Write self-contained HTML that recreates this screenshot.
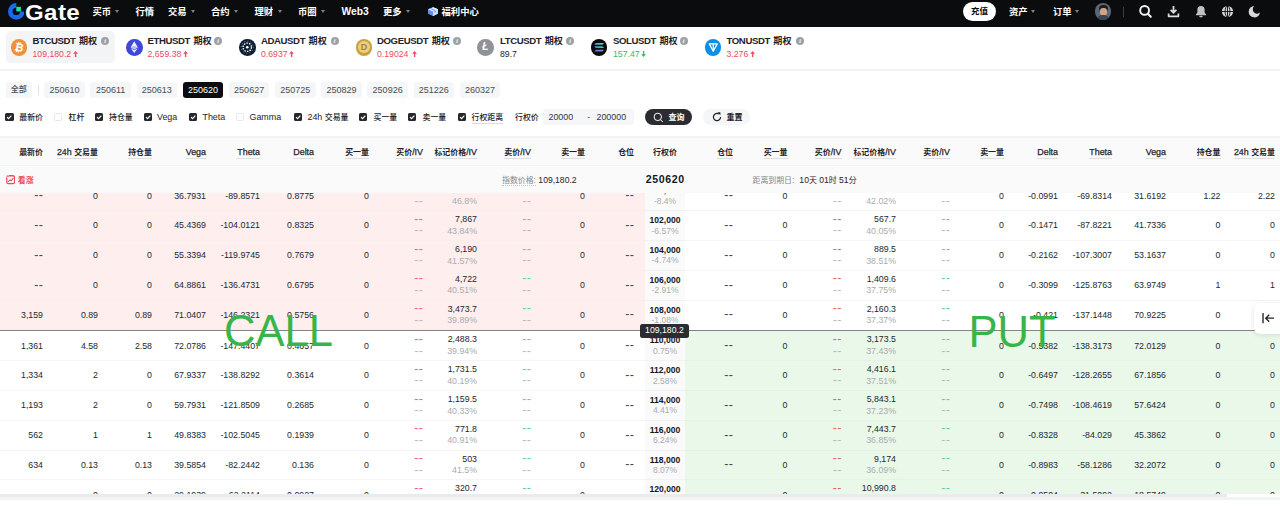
<!DOCTYPE html><html lang="zh-CN"><head><meta charset="utf-8"><title>Gate 期权</title><style>
*{margin:0;padding:0;box-sizing:border-box}
html,body{width:1280px;height:506px;overflow:hidden;background:#fff}
body{font-family:"Liberation Sans","Noto Sans CJK SC",sans-serif;font-size:9px;color:#1f2329;position:relative;line-height:1}
.a{position:absolute;white-space:nowrap}
#hdr{left:0;top:0;width:1280px;height:26.5px;background:#0b0c0d}
.nav{color:#fff;font-weight:700;font-size:10.3px;top:5.5px;height:12px;line-height:12px}
.nav .z{font-size:9.35px}
.car{position:absolute;width:0;height:0;border-left:2.6px solid transparent;border-right:2.6px solid transparent;border-top:3.3px solid #7d8187;top:10px}
.tk-n{font-weight:700;font-size:9.6px;color:#1f2329;top:34.6px;height:11px;line-height:11px;letter-spacing:-.4px}
.tk-n .z{font-size:9.1px;letter-spacing:0;margin-left:1.2px}
.tk-p{font-size:8.7px;top:49px;height:10px;line-height:10px}
.red{color:#ef4a5c}.grn{color:#2fbd6a}
.info{position:absolute;width:8px;height:8px;border-radius:50%;background:#9ea1a6;top:37.2px;color:#fff;font-size:6px;font-weight:700;font-style:italic;text-align:center;line-height:8px;font-family:"Liberation Serif",serif}
.ico{position:absolute;width:16.5px;height:16.5px;border-radius:50%;top:39.3px}
.tab{position:absolute;top:82px;height:16px;width:40.5px;border-radius:3px;background:#f5f6f7;color:#4a4d53;font-size:9px;text-align:center;line-height:16px}
.tab.sel{background:#0b0c0d;color:#fff}
.cb{position:absolute;top:112.7px;width:8.3px;height:8px;border-radius:1.5px;background:#25272c}
.cb.off{background:#fff;border:1px solid #e6e8eb}
.cb svg{position:absolute;left:0;top:0}
.cbl{top:111px;height:12px;line-height:12px;font-size:8.9px;color:#1f2329}
.cbl .z{font-size:7.9px;font-weight:500}
.th{font-size:8.9px;color:#1f2329;top:145.6px;height:12px;line-height:12px;text-align:right;-webkit-text-stroke:.25px #1f2329}
.th .z{font-size:7.95px;font-weight:700;-webkit-text-stroke:0}
.th.u span.w{display:inline-block;height:13px;border-bottom:1px solid #dcdee1}
.c{position:absolute;white-space:nowrap;text-align:right;font-size:8.8px;color:#24272c;height:12px;line-height:12px}
.c:not(.rd):not(.gd):not(.gy)>.d{color:#44474c}
.d{font-size:12.5px;line-height:0;letter-spacing:.3px;margin-right:-.3px;font-weight:400;position:relative;top:.6px}
.g{color:#a9acb0}
.rd{color:#f2606f}.gd{color:#5fd198}.gy{color:#b9bbbf}
.sk{position:absolute;left:635px;width:60px;text-align:center;white-space:nowrap;font-size:8.5px;height:12px;line-height:12px}
.sk b{font-weight:700;color:#15171a;font-size:8.55px}
.sub{top:173.8px;height:12px;line-height:12px;font-size:8.6px;color:#1f2329}
.sub .z{font-size:7.9px}
</style></head><body>
<div id="hdr" class="a">
<svg class="a" style="left:7.9px;top:3px" width="16.6" height="16.8" viewBox="0 0 34 34"><path d="M17 0a17 17 0 1 0 17 17h-9.4A7.6 7.6 0 1 1 17 9.4z" fill="#1768f2"/><rect x="17" y="7.6" width="9.4" height="9.4" fill="#17e6a1"/></svg>
<div class="a" style="left:25.4px;top:-.5px;font-size:21.6px;font-weight:700;color:#fff;line-height:25px;letter-spacing:.35px;transform:scaleX(1.115);transform-origin:0 0">Gate</div>
<div class="a nav" style="left:92.5px"><span class="z">买币</span></div>
<div class="car" style="left:114.7px"></div>
<div class="a nav" style="left:135.5px"><span class="z">行情</span></div>
<div class="a nav" style="left:168px"><span class="z">交易</span></div>
<div class="car" style="left:190.9px"></div>
<div class="a nav" style="left:211px"><span class="z">合约</span></div>
<div class="car" style="left:234.4px"></div>
<div class="a nav" style="left:254.5px"><span class="z">理财</span></div>
<div class="car" style="left:277.9px"></div>
<div class="a nav" style="left:298px"><span class="z">币圈</span></div>
<div class="car" style="left:321.4px"></div>
<div class="a nav" style="left:341.5px">Web3</div>
<div class="a nav" style="left:383px"><span class="z">更多</span></div>
<div class="car" style="left:406.4px"></div>
<svg class="a" style="left:427.8px;top:7.4px" width="10.4" height="9.2" viewBox="0 0 21 18"><path d="M10.5 0 .5 4.2v8.6l10 5.2 10-5.2V4.2z" fill="#9cc4f5"/><path d="M10.5 8.6.5 4.2v8.6l10 5.2z" fill="#5f93e6"/><path d="M10.5 8.6l10-4.4v8.6l-10 5.2z" fill="#cfe3fb"/><path d="M10.5 0 .5 4.2l10 4.4 10-4.4z" fill="#e4f0ff"/><path d="M4.5 2.5l10 4.5v4" fill="none" stroke="#3f7be0" stroke-width="1.6"/></svg>
<div class="a nav" style="left:441.5px"><span class="z">福利中心</span></div>
<div class="a" style="left:963px;top:2px;width:33px;height:18.7px;border-radius:10px;background:#fff;color:#0b0c0d;font-weight:700;font-size:8.5px;line-height:18.7px;text-align:center">充值</div>
<div class="a nav" style="left:1009px"><span class="z">资产</span></div><div class="car" style="left:1031px"></div>
<div class="a nav" style="left:1053px"><span class="z">订单</span></div><div class="car" style="left:1075px"></div>
<div class="a" style="left:1094.5px;top:3px;width:16.5px;height:16.5px;border-radius:50%;overflow:hidden;background:#5d6675"><div class="a" style="left:4px;top:1.5px;width:9px;height:6px;border-radius:4px 4px 2px 2px;background:#1d1b1c"></div><div class="a" style="left:5px;top:4.5px;width:7px;height:8px;border-radius:3px 3px 3.5px 3.5px;background:#d3a283"></div><div class="a" style="left:2.5px;top:12px;width:12px;height:6px;border-radius:5px 5px 0 0;background:#3a4256"></div></div>
<div class="a" style="left:1123px;top:7px;width:1px;height:10px;background:#3a3d42"></div>
<svg class="a" style="left:1138px;top:4px" width="15" height="15" viewBox="0 0 15 15"><circle cx="6.6" cy="6.4" r="4.4" fill="none" stroke="#f2f2f2" stroke-width="1.9"/><path d="M9.8 9.8l3 3" stroke="#f2f2f2" stroke-width="2" stroke-linecap="round"/></svg>
<svg class="a" style="left:1167px;top:4.5px" width="13" height="13" viewBox="0 0 13 13"><path d="M6.5 1v6.2M3.6 4.8l2.9 2.9 2.9-2.9" fill="none" stroke="#dcdcdc" stroke-width="1.8"/><path d="M1.6 8.4v2.9h9.8V8.4" fill="none" stroke="#dcdcdc" stroke-width="1.7" stroke-linejoin="round"/></svg>
<svg class="a" style="left:1195px;top:4.5px" width="12" height="13" viewBox="0 0 12 13"><path d="M6 1a3.6 3.6 0 0 0-3.6 3.6v3L1 9.6v.6h10v-.6L9.6 7.6v-3A3.6 3.6 0 0 0 6 1z" fill="#c2c2c2"/><rect x="4.3" y="10.8" width="3.4" height="1.4" rx=".7" fill="#c2c2c2"/></svg>
<svg class="a" style="left:1221px;top:4.5px" width="13" height="13" viewBox="0 0 13 13"><circle cx="6.5" cy="6.5" r="5.6" fill="#d4d4d4"/><ellipse cx="6.5" cy="6.5" rx="2.4" ry="5.6" fill="none" stroke="#0b0c0d" stroke-width=".9"/><path d="M1 6.5h11M6.5 1v11" stroke="#0b0c0d" stroke-width=".9"/></svg>
<svg class="a" style="left:1248px;top:4.5px" width="13" height="13" viewBox="0 0 13 13"><path d="M6.3 1A5.7 5.7 0 1 0 12 7.6 4.3 4.3 0 0 1 6.3 1z" fill="#d8d8d8"/></svg>
</div>
<div class="a" style="left:5.6px;top:31px;width:109.2px;height:31.7px;border-radius:5px;background:#f3f4f5"></div>
<div class="ico" style="left:10.95px;background:#f0913a">
<div class="a" style="left:0;top:0;width:16.5px;line-height:16.5px;text-align:center;color:#fff;font-weight:700;font-size:11px;transform:rotate(13deg)">₿</div>
</div>
<div class="a tk-n" style="left:32.5px">BTCUSDT <span class="z">期权</span></div>
<div class="info" style="left:101px">i</div>
<div class="a tk-p red" style="left:32.5px">109,180.2</div>
<svg class="a" style="left:73.3px;top:51.4px" width="5.2" height="6" viewBox="0 0 6 7"><path d="M3 0 .2 3.2h2V7h1.6V3.2h2z" fill="#ef4a5c"/></svg>
<div class="ico" style="left:126.05px;background:#4048d8">
<svg class="a" style="left:0;top:0" width="16.5" height="16.5" viewBox="0 0 17 17"><path d="M8.5 2.4 4.9 8.6l3.6 2.1 3.6-2.1z" fill="#fff" opacity=".92"/><path d="M4.9 9.5l3.6 5 3.6-5-3.6 2.1z" fill="#fff" opacity=".92"/><path d="M4.9 8.6l3.6-1.6 3.6 1.6-3.6 2.1z" fill="#b9bdf2"/></svg>
</div>
<div class="a tk-n" style="left:147.5px">ETHUSDT <span class="z">期权</span></div>
<div class="info" style="left:214px">i</div>
<div class="a tk-p red" style="left:147.5px">2,659.38</div>
<svg class="a" style="left:182.6px;top:51.4px" width="5.2" height="6" viewBox="0 0 6 7"><path d="M3 0 .2 3.2h2V7h1.6V3.2h2z" fill="#ef4a5c"/></svg>
<div class="ico" style="left:239.25px;background:#0d1e30">
<svg class="a" style="left:0;top:0" width="16.5" height="16.5" viewBox="0 0 17 17"><circle cx="8.5" cy="8.5" r="4.3" fill="none" stroke="#fff" stroke-width="1.4" stroke-dasharray="1.5 1.2"/><circle cx="8.5" cy="8.5" r="1.4" fill="#fff"/><circle cx="8.5" cy="8.5" r="6.2" fill="none" stroke="#fff" stroke-width=".6" stroke-dasharray=".8 2.4"/></svg>
</div>
<div class="a tk-n" style="left:261px">ADAUSDT <span class="z">期权</span></div>
<div class="info" style="left:330.5px">i</div>
<div class="a tk-p red" style="left:261px">0.6937</div>
<svg class="a" style="left:289.1px;top:51.4px" width="5.2" height="6" viewBox="0 0 6 7"><path d="M3 0 .2 3.2h2V7h1.6V3.2h2z" fill="#ef4a5c"/></svg>
<div class="ico" style="left:355.65px;background:#c9a136">
<div class="a" style="left:2.2px;top:2.2px;width:12px;height:12px;border-radius:50%;background:#e8cf86"></div><div class="a" style="left:0;top:0;width:16.5px;line-height:16.5px;text-align:center;color:#a8842a;font-weight:700;font-size:9px">D</div>
</div>
<div class="a tk-n" style="left:377px">DOGEUSDT <span class="z">期权</span></div>
<div class="info" style="left:453px">i</div>
<div class="a tk-p red" style="left:377px">0.19024</div>
<svg class="a" style="left:411.6px;top:51.4px" width="5.2" height="6" viewBox="0 0 6 7"><path d="M3 0 .2 3.2h2V7h1.6V3.2h2z" fill="#ef4a5c"/></svg>
<div class="ico" style="left:477.15px;background:#909295">
<div class="a" style="left:0;top:0;width:16.5px;line-height:16.5px;text-align:center;color:#fff;font-weight:700;font-size:10px;font-style:italic">Ł</div>
</div>
<div class="a tk-n" style="left:500px">LTCUSDT <span class="z">期权</span></div>
<div class="info" style="left:566px">i</div>
<div class="a tk-p " style="left:500px">89.7</div>
<div class="ico" style="left:590.65px;background:#0a0b0d">
<svg class="a" style="left:0;top:0" width="16.5" height="16.5" viewBox="0 0 17 17"><defs><linearGradient id="sg" x1="0" y1="1" x2="1" y2="0"><stop offset="0" stop-color="#9945ff"/><stop offset="1" stop-color="#19fb9b"/></linearGradient></defs><path d="M5 4h8.4l-1.6 1.9H3.4zM3.4 7.5h8.4l1.6 1.9H5zM5 11h8.4l-1.6 1.9H3.4z" fill="url(#sg)"/></svg>
</div>
<div class="a tk-n" style="left:613px">SOLUSDT <span class="z">期权</span></div>
<div class="info" style="left:679.5px">i</div>
<div class="a tk-p grn" style="left:613px">157.47</div>
<svg class="a" style="left:640.6px;top:51.4px" width="5.2" height="6" viewBox="0 0 6 7"><path d="M3 7 .2 3.8h2V0h1.6v3.8h2z" fill="#2fbd6a"/></svg>
<div class="ico" style="left:704.65px;background:#0d8fe6">
<svg class="a" style="left:0;top:0" width="16.5" height="16.5" viewBox="0 0 17 17"><path d="M4.4 5h8.2l-4.1 7.6z" fill="none" stroke="#fff" stroke-width="1.3" stroke-linejoin="round"/><path d="M8.5 5v7" stroke="#fff" stroke-width="1.2"/></svg>
</div>
<div class="a tk-n" style="left:726.5px">TONUSDT <span class="z">期权</span></div>
<div class="info" style="left:796px">i</div>
<div class="a tk-p red" style="left:726.5px">3.276</div>
<svg class="a" style="left:750.1px;top:51.4px" width="5.2" height="6" viewBox="0 0 6 7"><path d="M3 0 .2 3.2h2V7h1.6V3.2h2z" fill="#ef4a5c"/></svg>
<div class="a" style="left:0;top:68.5px;width:1280px;height:2.5px;background:#f2f3f5"></div>
<div class="tab" style="left:5.5px;width:26.7px;font-size:8px;font-weight:500">全部</div>
<div class="a" style="left:38.3px;top:85px;width:1px;height:10px;background:#dfe1e4"></div>
<div class="tab" style="left:44.2px">250610</div>
<div class="tab" style="left:90.4px">250611</div>
<div class="tab" style="left:136.5px">250613</div>
<div class="tab sel" style="left:182.7px">250620</div>
<div class="tab" style="left:228.9px">250627</div>
<div class="tab" style="left:275.1px">250725</div>
<div class="tab" style="left:321.2px">250829</div>
<div class="tab" style="left:367.4px">250926</div>
<div class="tab" style="left:413.6px">251226</div>
<div class="tab" style="left:459.7px">260327</div>
<div class="cb" style="left:5.4px"><svg width="8.3" height="8" viewBox="0 0 8 8"><path d="M1.9 4.1l1.5 1.5 2.8-3" fill="none" stroke="#fff" stroke-width="1.1"/></svg></div>
<div class="a cbl" style="left:19.3px"><span class="z">最新价</span></div>
<div class="cb off" style="left:54px"></div>
<div class="a cbl" style="left:68.5px"><span class="z">杠杆</span></div>
<div class="cb" style="left:95px"><svg width="8.3" height="8" viewBox="0 0 8 8"><path d="M1.9 4.1l1.5 1.5 2.8-3" fill="none" stroke="#fff" stroke-width="1.1"/></svg></div>
<div class="a cbl" style="left:109px"><span class="z">持仓量</span></div>
<div class="cb" style="left:143.5px"><svg width="8.3" height="8" viewBox="0 0 8 8"><path d="M1.9 4.1l1.5 1.5 2.8-3" fill="none" stroke="#fff" stroke-width="1.1"/></svg></div>
<div class="a cbl" style="left:157px">Vega</div>
<div class="cb" style="left:189px"><svg width="8.3" height="8" viewBox="0 0 8 8"><path d="M1.9 4.1l1.5 1.5 2.8-3" fill="none" stroke="#fff" stroke-width="1.1"/></svg></div>
<div class="a cbl" style="left:202.5px">Theta</div>
<div class="cb off" style="left:236px"></div>
<div class="a cbl" style="left:249.5px">Gamma</div>
<div class="cb" style="left:294px"><svg width="8.3" height="8" viewBox="0 0 8 8"><path d="M1.9 4.1l1.5 1.5 2.8-3" fill="none" stroke="#fff" stroke-width="1.1"/></svg></div>
<div class="a cbl" style="left:307.5px">24h <span class="z">交易量</span></div>
<div class="cb" style="left:359px"><svg width="8.3" height="8" viewBox="0 0 8 8"><path d="M1.9 4.1l1.5 1.5 2.8-3" fill="none" stroke="#fff" stroke-width="1.1"/></svg></div>
<div class="a cbl" style="left:373.5px"><span class="z">买一量</span></div>
<div class="cb" style="left:408px"><svg width="8.3" height="8" viewBox="0 0 8 8"><path d="M1.9 4.1l1.5 1.5 2.8-3" fill="none" stroke="#fff" stroke-width="1.1"/></svg></div>
<div class="a cbl" style="left:422.5px"><span class="z">卖一量</span></div>
<div class="cb" style="left:457.5px"><svg width="8.3" height="8" viewBox="0 0 8 8"><path d="M1.9 4.1l1.5 1.5 2.8-3" fill="none" stroke="#fff" stroke-width="1.1"/></svg></div>
<div class="a cbl" style="left:471.5px;border-bottom:1px solid #d9dbdf;height:12.5px"><span class="z">行权距离</span></div>
<div class="a cbl" style="left:515px"><span class="z">行权价</span></div>
<div class="a" style="left:542.7px;top:108.7px;width:91.3px;height:16px;border-radius:3px;background:#f5f6f7"></div>
<div class="a cbl" style="left:548.5px;color:#33363b">20000</div><div class="a cbl" style="left:587.2px;color:#4e5157">-</div><div class="a cbl" style="left:596.5px;color:#33363b">200000</div>
<div class="a" style="left:644.8px;top:108.8px;width:47.2px;height:16.4px;border-radius:8.2px;background:#2a2c31"></div>
<svg class="a" style="left:652.6px;top:111.6px" width="11" height="11" viewBox="0 0 11 11"><circle cx="4.8" cy="4.9" r="3.7" fill="none" stroke="#fff" stroke-width="1"/><path d="M7.5 7.7l2.3 2.3" stroke="#fff" stroke-width="1"/></svg>
<div class="a cbl" style="left:668.5px;color:#fff"><span class="z" style="font-weight:700;font-size:8px">查询</span></div>
<div class="a" style="left:703px;top:108.8px;width:47px;height:16.4px;border-radius:8.2px;background:#f5f6f7"></div>
<svg class="a" style="left:711.6px;top:111.8px" width="10" height="10" viewBox="0 0 10 10"><path d="M8.6 5A3.6 3.6 0 1 1 6.9 1.95" fill="none" stroke="#1f2329" stroke-width="1.25"/><path d="M5.5.3h2.9v2.9z" fill="#1f2329"/></svg>
<div class="a cbl" style="left:726.4px"><span class="z" style="font-weight:700;font-size:8px">重置</span></div>
<div class="a" style="left:0;top:136px;width:1280px;height:2px;background:#f2f3f5"></div>
<div class="a" style="left:0;top:138px;width:1280px;height:28px;background:#fafafa;border-bottom:1px solid #f1f2f3"></div>
<div class="a th" style="right:1237px"><span class="w"><span class="z">最新价</span></span></div>
<div class="a th u" style="right:1182px"><span class="w">24h <span class="z">交易量</span></span></div>
<div class="a th u" style="right:1128px"><span class="w"><span class="z">持仓量</span></span></div>
<div class="a th u" style="right:1074px"><span class="w">Vega</span></div>
<div class="a th u" style="right:1020px"><span class="w">Theta</span></div>
<div class="a th u" style="right:966px"><span class="w">Delta</span></div>
<div class="a th u" style="right:911px"><span class="w"><span class="z">买一量</span></span></div>
<div class="a th u" style="right:857px"><span class="w"><span class="z">买价</span>/IV</span></div>
<div class="a th u" style="right:803px"><span class="w"><span class="z">标记价格</span>/IV</span></div>
<div class="a th u" style="right:749px"><span class="w"><span class="z">卖价</span>/IV</span></div>
<div class="a th u" style="right:695px"><span class="w"><span class="z">卖一量</span></span></div>
<div class="a th" style="right:646px"><span class="w"><span class="z">仓位</span></span></div>
<div class="a th" style="left:645px;width:40px;text-align:center"><span class="z">行权价</span></div>
<div class="a th u" style="right:547px"><span class="w"><span class="z">仓位</span></span></div>
<div class="a th u" style="right:492.5px"><span class="w"><span class="z">买一量</span></span></div>
<div class="a th u" style="right:438.5px"><span class="w"><span class="z">买价</span>/IV</span></div>
<div class="a th u" style="right:384px"><span class="w"><span class="z">标记价格</span>/IV</span></div>
<div class="a th u" style="right:330px"><span class="w"><span class="z">卖价</span>/IV</span></div>
<div class="a th u" style="right:276px"><span class="w"><span class="z">卖一量</span></span></div>
<div class="a th u" style="right:222px"><span class="w">Delta</span></div>
<div class="a th u" style="right:168px"><span class="w">Theta</span></div>
<div class="a th u" style="right:114px"><span class="w">Vega</span></div>
<div class="a th u" style="right:59.5px"><span class="w"><span class="z">持仓量</span></span></div>
<div class="a th u" style="right:5px"><span class="w">24h <span class="z">交易量</span></span></div>
<div class="a" id="tb" style="left:0;top:193px;width:1280px;height:301px;overflow:hidden">
<div class="a" style="left:0;top:0;width:645px;height:137.39999999999998px;background:#feeeee"></div>
<div class="a" style="left:685px;top:137.39999999999998px;width:595px;height:200px;background:#eaf8ea"></div>
<div class="a" style="left:645px;top:0;width:40px;height:301px;background:#fafafa"></div>
<div class="a" style="left:0;top:-13px;width:645px;height:1px;background:#f6efee"></div>
<div class="a" style="left:645px;top:-13px;width:40px;height:1px;background:#f1f2f3"></div>
<div class="a" style="left:685px;top:-13px;width:595px;height:1px;background:#f4f5f6"></div>
<div class="c" style="right:1237px;top:-3.4px"><span class="d">--</span></div>
<div class="c" style="right:1182px;top:-3.4px">0</div>
<div class="c" style="right:1128px;top:-3.4px">0</div>
<div class="c" style="right:1074px;top:-3.4px">36.7931</div>
<div class="c" style="right:1020px;top:-3.4px">-89.8571</div>
<div class="c" style="right:966px;top:-3.4px">0.8775</div>
<div class="c" style="right:911px;top:-3.4px">0</div>
<div class="c rd" style="right:857px;top:-9.6px"><span class="d">--</span></div><div class="c gy" style="right:857px;top:2.0px"><span class="d">--</span></div>
<div class="c" style="right:803px;top:-9.6px">9,618.2</div><div class="c g" style="right:803px;top:2.0px">46.8%</div>
<div class="c gd" style="right:749px;top:-9.6px"><span class="d">--</span></div><div class="c gy" style="right:749px;top:2.0px"><span class="d">--</span></div>
<div class="c" style="right:695px;top:-3.4px">0</div>
<div class="c" style="right:646px;top:-3.4px"><span class="d">--</span></div>
<div class="sk" style="top:-8.6px"><b>100,000</b></div><div class="sk g" style="top:1.8px">-8.4%</div>
<div class="c" style="right:547px;top:-3.4px"><span class="d">--</span></div>
<div class="c" style="right:492.5px;top:-3.4px">0</div>
<div class="c rd" style="right:438.5px;top:-9.6px"><span class="d">--</span></div><div class="c gy" style="right:438.5px;top:2.0px"><span class="d">--</span></div>
<div class="c" style="right:384px;top:-9.6px">329.4</div><div class="c g" style="right:384px;top:2.0px">42.02%</div>
<div class="c gd" style="right:330px;top:-9.6px"><span class="d">--</span></div><div class="c gy" style="right:330px;top:2.0px"><span class="d">--</span></div>
<div class="c" style="right:276px;top:-3.4px">0</div>
<div class="c" style="right:222px;top:-3.4px">-0.0991</div>
<div class="c" style="right:168px;top:-3.4px">-69.8314</div>
<div class="c" style="right:114px;top:-3.4px">31.6192</div>
<div class="c" style="right:59.5px;top:-3.4px">1.22</div>
<div class="c" style="right:5px;top:-3.4px">2.22</div>
<div class="a" style="left:0;top:17px;width:645px;height:1px;background:#f6efee"></div>
<div class="a" style="left:645px;top:17px;width:40px;height:1px;background:#f1f2f3"></div>
<div class="a" style="left:685px;top:17px;width:595px;height:1px;background:#f4f5f6"></div>
<div class="c" style="right:1237px;top:26.4px"><span class="d">--</span></div>
<div class="c" style="right:1182px;top:26.4px">0</div>
<div class="c" style="right:1128px;top:26.4px">0</div>
<div class="c" style="right:1074px;top:26.4px">45.4369</div>
<div class="c" style="right:1020px;top:26.4px">-104.0121</div>
<div class="c" style="right:966px;top:26.4px">0.8325</div>
<div class="c" style="right:911px;top:26.4px">0</div>
<div class="c rd" style="right:857px;top:20.2px"><span class="d">--</span></div><div class="c gy" style="right:857px;top:31.8px"><span class="d">--</span></div>
<div class="c" style="right:803px;top:20.2px">7,867</div><div class="c g" style="right:803px;top:31.8px">43.84%</div>
<div class="c gd" style="right:749px;top:20.2px"><span class="d">--</span></div><div class="c gy" style="right:749px;top:31.8px"><span class="d">--</span></div>
<div class="c" style="right:695px;top:26.4px">0</div>
<div class="c" style="right:646px;top:26.4px"><span class="d">--</span></div>
<div class="sk" style="top:21.2px"><b>102,000</b></div><div class="sk g" style="top:31.6px">-6.57%</div>
<div class="c" style="right:547px;top:26.4px"><span class="d">--</span></div>
<div class="c" style="right:492.5px;top:26.4px">0</div>
<div class="c rd" style="right:438.5px;top:20.2px"><span class="d">--</span></div><div class="c gy" style="right:438.5px;top:31.8px"><span class="d">--</span></div>
<div class="c" style="right:384px;top:20.2px">567.7</div><div class="c g" style="right:384px;top:31.8px">40.05%</div>
<div class="c gd" style="right:330px;top:20.2px"><span class="d">--</span></div><div class="c gy" style="right:330px;top:31.8px"><span class="d">--</span></div>
<div class="c" style="right:276px;top:26.4px">0</div>
<div class="c" style="right:222px;top:26.4px">-0.1471</div>
<div class="c" style="right:168px;top:26.4px">-87.8221</div>
<div class="c" style="right:114px;top:26.4px">41.7336</div>
<div class="c" style="right:59.5px;top:26.4px">0</div>
<div class="c" style="right:5px;top:26.4px">0</div>
<div class="a" style="left:0;top:47px;width:645px;height:1px;background:#f6efee"></div>
<div class="a" style="left:645px;top:47px;width:40px;height:1px;background:#f1f2f3"></div>
<div class="a" style="left:685px;top:47px;width:595px;height:1px;background:#f4f5f6"></div>
<div class="c" style="right:1237px;top:56.2px"><span class="d">--</span></div>
<div class="c" style="right:1182px;top:56.2px">0</div>
<div class="c" style="right:1128px;top:56.2px">0</div>
<div class="c" style="right:1074px;top:56.2px">55.3394</div>
<div class="c" style="right:1020px;top:56.2px">-119.9745</div>
<div class="c" style="right:966px;top:56.2px">0.7679</div>
<div class="c" style="right:911px;top:56.2px">0</div>
<div class="c rd" style="right:857px;top:50.0px"><span class="d">--</span></div><div class="c gy" style="right:857px;top:61.6px"><span class="d">--</span></div>
<div class="c" style="right:803px;top:50.0px">6,190</div><div class="c g" style="right:803px;top:61.6px">41.57%</div>
<div class="c gd" style="right:749px;top:50.0px"><span class="d">--</span></div><div class="c gy" style="right:749px;top:61.6px"><span class="d">--</span></div>
<div class="c" style="right:695px;top:56.2px">0</div>
<div class="c" style="right:646px;top:56.2px"><span class="d">--</span></div>
<div class="sk" style="top:51.0px"><b>104,000</b></div><div class="sk g" style="top:61.4px">-4.74%</div>
<div class="c" style="right:547px;top:56.2px"><span class="d">--</span></div>
<div class="c" style="right:492.5px;top:56.2px">0</div>
<div class="c rd" style="right:438.5px;top:50.0px"><span class="d">--</span></div><div class="c gy" style="right:438.5px;top:61.6px"><span class="d">--</span></div>
<div class="c" style="right:384px;top:50.0px">889.5</div><div class="c g" style="right:384px;top:61.6px">38.51%</div>
<div class="c gd" style="right:330px;top:50.0px"><span class="d">--</span></div><div class="c gy" style="right:330px;top:61.6px"><span class="d">--</span></div>
<div class="c" style="right:276px;top:56.2px">0</div>
<div class="c" style="right:222px;top:56.2px">-0.2162</div>
<div class="c" style="right:168px;top:56.2px">-107.3007</div>
<div class="c" style="right:114px;top:56.2px">53.1637</div>
<div class="c" style="right:59.5px;top:56.2px">0</div>
<div class="c" style="right:5px;top:56.2px">0</div>
<div class="a" style="left:0;top:77px;width:645px;height:1px;background:#f6efee"></div>
<div class="a" style="left:645px;top:77px;width:40px;height:1px;background:#f1f2f3"></div>
<div class="a" style="left:685px;top:77px;width:595px;height:1px;background:#f4f5f6"></div>
<div class="c" style="right:1237px;top:86.0px"><span class="d">--</span></div>
<div class="c" style="right:1182px;top:86.0px">0</div>
<div class="c" style="right:1128px;top:86.0px">0</div>
<div class="c" style="right:1074px;top:86.0px">64.8861</div>
<div class="c" style="right:1020px;top:86.0px">-136.4731</div>
<div class="c" style="right:966px;top:86.0px">0.6795</div>
<div class="c" style="right:911px;top:86.0px">0</div>
<div class="c rd" style="right:857px;top:79.8px"><span class="d">--</span></div><div class="c gy" style="right:857px;top:91.4px"><span class="d">--</span></div>
<div class="c" style="right:803px;top:79.8px">4,722</div><div class="c g" style="right:803px;top:91.4px">40.51%</div>
<div class="c gd" style="right:749px;top:79.8px"><span class="d">--</span></div><div class="c gy" style="right:749px;top:91.4px"><span class="d">--</span></div>
<div class="c" style="right:695px;top:86.0px">0</div>
<div class="c" style="right:646px;top:86.0px"><span class="d">--</span></div>
<div class="sk" style="top:80.8px"><b>106,000</b></div><div class="sk g" style="top:91.2px">-2.91%</div>
<div class="c" style="right:547px;top:86.0px"><span class="d">--</span></div>
<div class="c" style="right:492.5px;top:86.0px">0</div>
<div class="c rd" style="right:438.5px;top:79.8px"><span class="d">--</span></div><div class="c gy" style="right:438.5px;top:91.4px"><span class="d">--</span></div>
<div class="c" style="right:384px;top:79.8px">1,409.6</div><div class="c g" style="right:384px;top:91.4px">37.75%</div>
<div class="c gd" style="right:330px;top:79.8px"><span class="d">--</span></div><div class="c gy" style="right:330px;top:91.4px"><span class="d">--</span></div>
<div class="c" style="right:276px;top:86.0px">0</div>
<div class="c" style="right:222px;top:86.0px">-0.3099</div>
<div class="c" style="right:168px;top:86.0px">-125.8763</div>
<div class="c" style="right:114px;top:86.0px">63.9749</div>
<div class="c" style="right:59.5px;top:86.0px">1</div>
<div class="c" style="right:5px;top:86.0px">1</div>
<div class="a" style="left:0;top:107px;width:645px;height:1px;background:#f6efee"></div>
<div class="a" style="left:645px;top:107px;width:40px;height:1px;background:#f1f2f3"></div>
<div class="a" style="left:685px;top:107px;width:595px;height:1px;background:#f4f5f6"></div>
<div class="c" style="right:1237px;top:115.8px">3,159</div>
<div class="c" style="right:1182px;top:115.8px">0.89</div>
<div class="c" style="right:1128px;top:115.8px">0.89</div>
<div class="c" style="right:1074px;top:115.8px">71.0407</div>
<div class="c" style="right:1020px;top:115.8px">-146.2321</div>
<div class="c" style="right:966px;top:115.8px">0.5756</div>
<div class="c" style="right:911px;top:115.8px">0</div>
<div class="c rd" style="right:857px;top:109.6px"><span class="d">--</span></div><div class="c gy" style="right:857px;top:121.2px"><span class="d">--</span></div>
<div class="c" style="right:803px;top:109.6px">3,473.7</div><div class="c g" style="right:803px;top:121.2px">39.89%</div>
<div class="c gd" style="right:749px;top:109.6px"><span class="d">--</span></div><div class="c gy" style="right:749px;top:121.2px"><span class="d">--</span></div>
<div class="c" style="right:695px;top:115.8px">0</div>
<div class="c" style="right:646px;top:115.8px"><span class="d">--</span></div>
<div class="sk" style="top:110.6px"><b>108,000</b></div><div class="sk g" style="top:121.0px">-1.08%</div>
<div class="c" style="right:547px;top:115.8px"><span class="d">--</span></div>
<div class="c" style="right:492.5px;top:115.8px">0</div>
<div class="c rd" style="right:438.5px;top:109.6px"><span class="d">--</span></div><div class="c gy" style="right:438.5px;top:121.2px"><span class="d">--</span></div>
<div class="c" style="right:384px;top:109.6px">2,160.3</div><div class="c g" style="right:384px;top:121.2px">37.37%</div>
<div class="c gd" style="right:330px;top:109.6px"><span class="d">--</span></div><div class="c gy" style="right:330px;top:121.2px"><span class="d">--</span></div>
<div class="c" style="right:276px;top:115.8px">0</div>
<div class="c" style="right:222px;top:115.8px">-0.421</div>
<div class="c" style="right:168px;top:115.8px">-137.1448</div>
<div class="c" style="right:114px;top:115.8px">70.9225</div>
<div class="c" style="right:59.5px;top:115.8px">0</div>
<div class="c" style="right:5px;top:115.8px">0</div>
<div class="c" style="right:1237px;top:146.6px">1,361</div>
<div class="c" style="right:1182px;top:146.6px">4.58</div>
<div class="c" style="right:1128px;top:146.6px">2.58</div>
<div class="c" style="right:1074px;top:146.6px">72.0786</div>
<div class="c" style="right:1020px;top:146.6px">-147.4407</div>
<div class="c" style="right:966px;top:146.6px">0.4657</div>
<div class="c" style="right:911px;top:146.6px">0</div>
<div class="c rd" style="right:857px;top:140.4px"><span class="d">--</span></div><div class="c gy" style="right:857px;top:152.0px"><span class="d">--</span></div>
<div class="c" style="right:803px;top:140.4px">2,488.3</div><div class="c g" style="right:803px;top:152.0px">39.94%</div>
<div class="c gd" style="right:749px;top:140.4px"><span class="d">--</span></div><div class="c gy" style="right:749px;top:152.0px"><span class="d">--</span></div>
<div class="c" style="right:695px;top:146.6px">0</div>
<div class="c" style="right:646px;top:146.6px"><span class="d">--</span></div>
<div class="sk" style="top:141.4px"><b>110,000</b></div><div class="sk g" style="top:151.8px">0.75%</div>
<div class="c" style="right:547px;top:146.6px"><span class="d">--</span></div>
<div class="c" style="right:492.5px;top:146.6px">0</div>
<div class="c rd" style="right:438.5px;top:140.4px"><span class="d">--</span></div><div class="c gy" style="right:438.5px;top:152.0px"><span class="d">--</span></div>
<div class="c" style="right:384px;top:140.4px">3,173.5</div><div class="c g" style="right:384px;top:152.0px">37.43%</div>
<div class="c gd" style="right:330px;top:140.4px"><span class="d">--</span></div><div class="c gy" style="right:330px;top:152.0px"><span class="d">--</span></div>
<div class="c" style="right:276px;top:146.6px">0</div>
<div class="c" style="right:222px;top:146.6px">-0.5382</div>
<div class="c" style="right:168px;top:146.6px">-138.3173</div>
<div class="c" style="right:114px;top:146.6px">72.0129</div>
<div class="c" style="right:59.5px;top:146.6px">0</div>
<div class="c" style="right:5px;top:146.6px">0</div>
<div class="a" style="left:0;top:167px;width:645px;height:1px;background:#f4f5f6"></div>
<div class="a" style="left:645px;top:167px;width:40px;height:1px;background:#f1f2f3"></div>
<div class="a" style="left:685px;top:167px;width:595px;height:1px;background:#e4f1e4"></div>
<div class="c" style="right:1237px;top:176.4px">1,334</div>
<div class="c" style="right:1182px;top:176.4px">2</div>
<div class="c" style="right:1128px;top:176.4px">0</div>
<div class="c" style="right:1074px;top:176.4px">67.9337</div>
<div class="c" style="right:1020px;top:176.4px">-138.8292</div>
<div class="c" style="right:966px;top:176.4px">0.3614</div>
<div class="c" style="right:911px;top:176.4px">0</div>
<div class="c rd" style="right:857px;top:170.2px"><span class="d">--</span></div><div class="c gy" style="right:857px;top:181.8px"><span class="d">--</span></div>
<div class="c" style="right:803px;top:170.2px">1,731.5</div><div class="c g" style="right:803px;top:181.8px">40.19%</div>
<div class="c gd" style="right:749px;top:170.2px"><span class="d">--</span></div><div class="c gy" style="right:749px;top:181.8px"><span class="d">--</span></div>
<div class="c" style="right:695px;top:176.4px">0</div>
<div class="c" style="right:646px;top:176.4px"><span class="d">--</span></div>
<div class="sk" style="top:171.2px"><b>112,000</b></div><div class="sk g" style="top:181.6px">2.58%</div>
<div class="c" style="right:547px;top:176.4px"><span class="d">--</span></div>
<div class="c" style="right:492.5px;top:176.4px">0</div>
<div class="c rd" style="right:438.5px;top:170.2px"><span class="d">--</span></div><div class="c gy" style="right:438.5px;top:181.8px"><span class="d">--</span></div>
<div class="c" style="right:384px;top:170.2px">4,416.1</div><div class="c g" style="right:384px;top:181.8px">37.51%</div>
<div class="c gd" style="right:330px;top:170.2px"><span class="d">--</span></div><div class="c gy" style="right:330px;top:181.8px"><span class="d">--</span></div>
<div class="c" style="right:276px;top:176.4px">0</div>
<div class="c" style="right:222px;top:176.4px">-0.6497</div>
<div class="c" style="right:168px;top:176.4px">-128.2655</div>
<div class="c" style="right:114px;top:176.4px">67.1856</div>
<div class="c" style="right:59.5px;top:176.4px">0</div>
<div class="c" style="right:5px;top:176.4px">0</div>
<div class="a" style="left:0;top:197px;width:645px;height:1px;background:#f4f5f6"></div>
<div class="a" style="left:645px;top:197px;width:40px;height:1px;background:#f1f2f3"></div>
<div class="a" style="left:685px;top:197px;width:595px;height:1px;background:#e4f1e4"></div>
<div class="c" style="right:1237px;top:206.2px">1,193</div>
<div class="c" style="right:1182px;top:206.2px">2</div>
<div class="c" style="right:1128px;top:206.2px">0</div>
<div class="c" style="right:1074px;top:206.2px">59.7931</div>
<div class="c" style="right:1020px;top:206.2px">-121.8509</div>
<div class="c" style="right:966px;top:206.2px">0.2685</div>
<div class="c" style="right:911px;top:206.2px">0</div>
<div class="c rd" style="right:857px;top:200.0px"><span class="d">--</span></div><div class="c gy" style="right:857px;top:211.6px"><span class="d">--</span></div>
<div class="c" style="right:803px;top:200.0px">1,159.5</div><div class="c g" style="right:803px;top:211.6px">40.33%</div>
<div class="c gd" style="right:749px;top:200.0px"><span class="d">--</span></div><div class="c gy" style="right:749px;top:211.6px"><span class="d">--</span></div>
<div class="c" style="right:695px;top:206.2px">0</div>
<div class="c" style="right:646px;top:206.2px"><span class="d">--</span></div>
<div class="sk" style="top:201.0px"><b>114,000</b></div><div class="sk g" style="top:211.4px">4.41%</div>
<div class="c" style="right:547px;top:206.2px"><span class="d">--</span></div>
<div class="c" style="right:492.5px;top:206.2px">0</div>
<div class="c rd" style="right:438.5px;top:200.0px"><span class="d">--</span></div><div class="c gy" style="right:438.5px;top:211.6px"><span class="d">--</span></div>
<div class="c" style="right:384px;top:200.0px">5,843.1</div><div class="c g" style="right:384px;top:211.6px">37.23%</div>
<div class="c gd" style="right:330px;top:200.0px"><span class="d">--</span></div><div class="c gy" style="right:330px;top:211.6px"><span class="d">--</span></div>
<div class="c" style="right:276px;top:206.2px">0</div>
<div class="c" style="right:222px;top:206.2px">-0.7498</div>
<div class="c" style="right:168px;top:206.2px">-108.4619</div>
<div class="c" style="right:114px;top:206.2px">57.6424</div>
<div class="c" style="right:59.5px;top:206.2px">0</div>
<div class="c" style="right:5px;top:206.2px">0</div>
<div class="a" style="left:0;top:227px;width:645px;height:1px;background:#f4f5f6"></div>
<div class="a" style="left:645px;top:227px;width:40px;height:1px;background:#f1f2f3"></div>
<div class="a" style="left:685px;top:227px;width:595px;height:1px;background:#e4f1e4"></div>
<div class="c" style="right:1237px;top:236.0px">562</div>
<div class="c" style="right:1182px;top:236.0px">1</div>
<div class="c" style="right:1128px;top:236.0px">1</div>
<div class="c" style="right:1074px;top:236.0px">49.8383</div>
<div class="c" style="right:1020px;top:236.0px">-102.5045</div>
<div class="c" style="right:966px;top:236.0px">0.1939</div>
<div class="c" style="right:911px;top:236.0px">0</div>
<div class="c rd" style="right:857px;top:229.8px"><span class="d">--</span></div><div class="c gy" style="right:857px;top:241.4px"><span class="d">--</span></div>
<div class="c" style="right:803px;top:229.8px">771.8</div><div class="c g" style="right:803px;top:241.4px">40.91%</div>
<div class="c gd" style="right:749px;top:229.8px"><span class="d">--</span></div><div class="c gy" style="right:749px;top:241.4px"><span class="d">--</span></div>
<div class="c" style="right:695px;top:236.0px">0</div>
<div class="c" style="right:646px;top:236.0px"><span class="d">--</span></div>
<div class="sk" style="top:230.8px"><b>116,000</b></div><div class="sk g" style="top:241.2px">6.24%</div>
<div class="c" style="right:547px;top:236.0px"><span class="d">--</span></div>
<div class="c" style="right:492.5px;top:236.0px">0</div>
<div class="c rd" style="right:438.5px;top:229.8px"><span class="d">--</span></div><div class="c gy" style="right:438.5px;top:241.4px"><span class="d">--</span></div>
<div class="c" style="right:384px;top:229.8px">7,443.7</div><div class="c g" style="right:384px;top:241.4px">36.85%</div>
<div class="c gd" style="right:330px;top:229.8px"><span class="d">--</span></div><div class="c gy" style="right:330px;top:241.4px"><span class="d">--</span></div>
<div class="c" style="right:276px;top:236.0px">0</div>
<div class="c" style="right:222px;top:236.0px">-0.8328</div>
<div class="c" style="right:168px;top:236.0px">-84.029</div>
<div class="c" style="right:114px;top:236.0px">45.3862</div>
<div class="c" style="right:59.5px;top:236.0px">0</div>
<div class="c" style="right:5px;top:236.0px">0</div>
<div class="a" style="left:0;top:257px;width:645px;height:1px;background:#f4f5f6"></div>
<div class="a" style="left:645px;top:257px;width:40px;height:1px;background:#f1f2f3"></div>
<div class="a" style="left:685px;top:257px;width:595px;height:1px;background:#e4f1e4"></div>
<div class="c" style="right:1237px;top:265.8px">634</div>
<div class="c" style="right:1182px;top:265.8px">0.13</div>
<div class="c" style="right:1128px;top:265.8px">0.13</div>
<div class="c" style="right:1074px;top:265.8px">39.5854</div>
<div class="c" style="right:1020px;top:265.8px">-82.2442</div>
<div class="c" style="right:966px;top:265.8px">0.136</div>
<div class="c" style="right:911px;top:265.8px">0</div>
<div class="c rd" style="right:857px;top:259.6px"><span class="d">--</span></div><div class="c gy" style="right:857px;top:271.2px"><span class="d">--</span></div>
<div class="c" style="right:803px;top:259.6px">503</div><div class="c g" style="right:803px;top:271.2px">41.5%</div>
<div class="c gd" style="right:749px;top:259.6px"><span class="d">--</span></div><div class="c gy" style="right:749px;top:271.2px"><span class="d">--</span></div>
<div class="c" style="right:695px;top:265.8px">0</div>
<div class="c" style="right:646px;top:265.8px"><span class="d">--</span></div>
<div class="sk" style="top:260.6px"><b>118,000</b></div><div class="sk g" style="top:271.0px">8.07%</div>
<div class="c" style="right:547px;top:265.8px"><span class="d">--</span></div>
<div class="c" style="right:492.5px;top:265.8px">0</div>
<div class="c rd" style="right:438.5px;top:259.6px"><span class="d">--</span></div><div class="c gy" style="right:438.5px;top:271.2px"><span class="d">--</span></div>
<div class="c" style="right:384px;top:259.6px">9,174</div><div class="c g" style="right:384px;top:271.2px">36.09%</div>
<div class="c gd" style="right:330px;top:259.6px"><span class="d">--</span></div><div class="c gy" style="right:330px;top:271.2px"><span class="d">--</span></div>
<div class="c" style="right:276px;top:265.8px">0</div>
<div class="c" style="right:222px;top:265.8px">-0.8983</div>
<div class="c" style="right:168px;top:265.8px">-58.1286</div>
<div class="c" style="right:114px;top:265.8px">32.2072</div>
<div class="c" style="right:59.5px;top:265.8px">0</div>
<div class="c" style="right:5px;top:265.8px">0</div>
<div class="a" style="left:0;top:286px;width:645px;height:1px;background:#f4f5f6"></div>
<div class="a" style="left:645px;top:286px;width:40px;height:1px;background:#f1f2f3"></div>
<div class="a" style="left:685px;top:286px;width:595px;height:1px;background:#e4f1e4"></div>
<div class="c" style="right:1237px;top:295.6px"><span class="d">--</span></div>
<div class="c" style="right:1182px;top:295.6px">0</div>
<div class="c" style="right:1128px;top:295.6px">0</div>
<div class="c" style="right:1074px;top:295.6px">29.1939</div>
<div class="c" style="right:1020px;top:295.6px">-62.2114</div>
<div class="c" style="right:966px;top:295.6px">0.0927</div>
<div class="c" style="right:911px;top:295.6px">0</div>
<div class="c rd" style="right:857px;top:289.4px"><span class="d">--</span></div><div class="c gy" style="right:857px;top:301.0px"><span class="d">--</span></div>
<div class="c" style="right:803px;top:289.4px">320.7</div><div class="c g" style="right:803px;top:301.0px">42.2%</div>
<div class="c gd" style="right:749px;top:289.4px"><span class="d">--</span></div><div class="c gy" style="right:749px;top:301.0px"><span class="d">--</span></div>
<div class="c" style="right:695px;top:295.6px">0</div>
<div class="c" style="right:646px;top:295.6px"><span class="d">--</span></div>
<div class="sk" style="top:290.4px"><b>120,000</b></div><div class="sk g" style="top:300.8px">9.91%</div>
<div class="c" style="right:547px;top:295.6px"><span class="d">--</span></div>
<div class="c" style="right:492.5px;top:295.6px">0</div>
<div class="c rd" style="right:438.5px;top:289.4px"><span class="d">--</span></div><div class="c gy" style="right:438.5px;top:301.0px"><span class="d">--</span></div>
<div class="c" style="right:384px;top:289.4px">10,990.8</div><div class="c g" style="right:384px;top:301.0px">35.4%</div>
<div class="c gd" style="right:330px;top:289.4px"><span class="d">--</span></div><div class="c gy" style="right:330px;top:301.0px"><span class="d">--</span></div>
<div class="c" style="right:276px;top:295.6px">0</div>
<div class="c" style="right:222px;top:295.6px">-0.9504</div>
<div class="c" style="right:168px;top:295.6px">-31.5092</div>
<div class="c" style="right:114px;top:295.6px">18.5749</div>
<div class="c" style="right:59.5px;top:295.6px">0</div>
<div class="c" style="right:5px;top:295.6px">0</div>
<div class="a" style="left:0;top:137px;width:1280px;height:1px;background:#808388"></div>
</div>
<div class="a" style="left:639.8px;top:324px;width:49.2px;height:13.5px;border-radius:2.5px;background:#2a2c31;color:#fff;font-size:8.7px;line-height:13.5px;text-align:center">109,180.2</div>
<div class="a" style="left:0;top:167px;width:1280px;height:26px;background:#fafafa"></div>
<svg class="a" style="left:5.8px;top:175.4px" width="9.4" height="9.4" viewBox="0 0 10 10"><path d="M3.6.8H7.4a1.8 1.8 0 0 1 1.8 1.8v4.8a1.8 1.8 0 0 1-1.8 1.8H2.6A1.8 1.8 0 0 1 .8 7.4V3.2" fill="none" stroke="#ef4a5c" stroke-width="1.35" stroke-linecap="round"/><path d="M1 1.2h1.6M2.6 6.8l1.9-1.6 1.2.9 1.9-2.5" fill="none" stroke="#ef4a5c" stroke-width="1.2" stroke-linecap="round"/></svg>
<div class="a sub" style="left:17.8px;color:#ef4a5c"><span class="z" style="font-weight:700;font-size:8px">看涨</span></div>
<div class="a sub" style="left:502px"><span style="color:#84888f;display:inline-block;height:12.5px;border-bottom:1px dotted #c4c6ca"><span class="z">指数价格</span>:</span> 109,180.2</div>
<div class="a" style="left:625px;width:80px;text-align:center;top:172px;height:15px;line-height:15px;font-size:10.6px;letter-spacing:.62px;font-weight:700;color:#15171a;text-indent:.6px">250620</div>
<div class="a sub" style="left:752.5px"><span style="color:#84888f"><span class="z">距离到期日</span>:</span><span style="display:inline-block;width:5px"></span>10<span class="z">天</span> 01<span class="z">时</span> 51<span class="z">分</span></div>
<div class="a" style="left:224px;top:305.8px;font-size:43.6px;line-height:50px;color:#38b549">CALL</div>
<div class="a" style="left:968.5px;top:306.8px;font-size:43.6px;line-height:50px;color:#38b549">PUT</div>
<div class="a" style="left:1253.6px;top:302.6px;width:28px;height:31.4px;border-radius:6px 0 0 6px;background:#fff;box-shadow:0 1px 5px rgba(0,0,0,.12)"></div>
<svg class="a" style="left:1262px;top:311.6px" width="12.4" height="12.4" viewBox="0 0 12 12"><path d="M1 1v10M11.6 6H3.8M7 2.6 3.6 6 7 9.4" fill="none" stroke="#1f2329" stroke-width="1.3"/></svg>
<div class="a" style="left:0;top:494px;width:1280px;height:12px;background:#fff"></div>
<div class="a" style="left:0;top:494px;width:1227px;height:3px;background:#e9ebef"></div>
<div class="a" style="left:0;top:497px;width:1280px;height:3px;background:#f2f3f5"></div>
</body></html>
